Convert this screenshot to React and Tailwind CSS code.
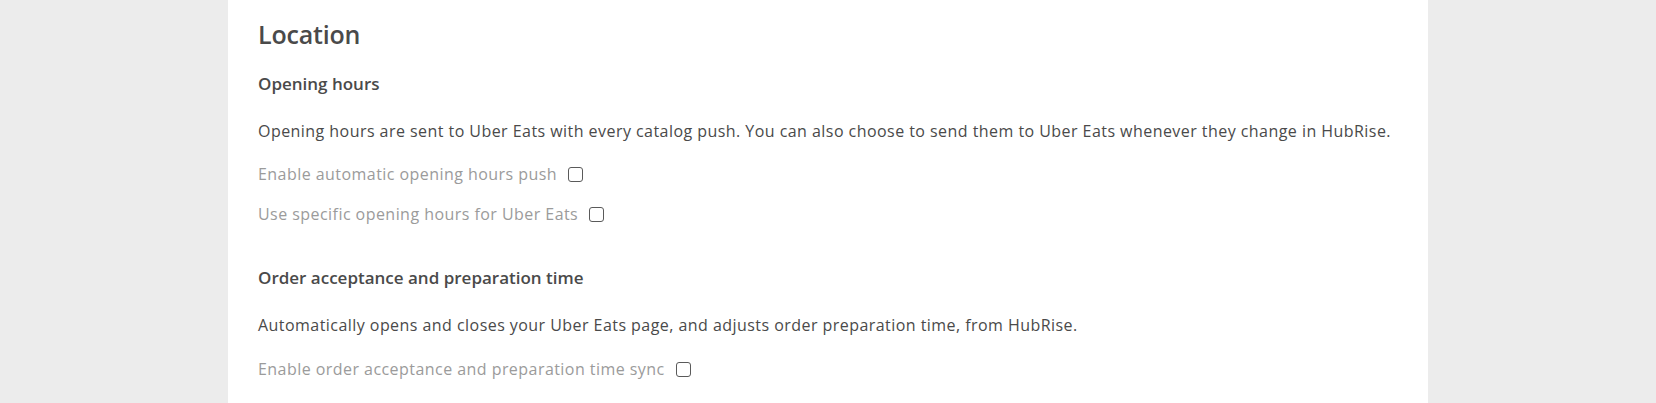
import React from 'react';

const font = { fontFamily: '"Open Sans", "Noto Sans", sans-serif' };

function CheckRow({ label, className = '' }) {
  return (
    <label className={`flex items-center h-[24px] leading-[24px] text-[16px] tracking-[0.45px] text-[#9b9b9b] ${className}`}>
      <span>{label}</span>
      <span className="ml-[11px] w-[15px] h-[15px] border-[1.5px] border-[#5a5a5a] rounded-[3px] bg-white" />
    </label>
  );
}

export default function App() {
  return (
    <div className="min-h-[403px] bg-[#ececec]" style={font}>
      <div className="w-[1200px] mx-auto bg-white min-h-[403px] pl-[30px] pr-[30px] pt-[18px] text-[#4a4a4a]">
        <h2 className="text-[25px] leading-[32px] font-semibold tracking-[-0.2px]">Location</h2>

        <h3 className="mt-[22px] text-[17px] leading-[24px] font-semibold">Opening hours</h3>
        <p className="mt-[23px] text-[16px] leading-[24px] tracking-[0.45px]">
          Opening hours are sent to Uber Eats with every catalog push. You can also choose to send them to Uber Eats whenever they change in HubRise.
        </p>
        <CheckRow className="mt-[19px]" label="Enable automatic opening hours push" />
        <CheckRow className="mt-[16px]" label="Use specific opening hours for Uber Eats" />

        <h3 className="mt-[40px] text-[17px] leading-[24px] font-semibold">Order acceptance and preparation time</h3>
        <p className="mt-[23px] text-[16px] leading-[24px] tracking-[0.45px]">
          Automatically opens and closes your Uber Eats page, and adjusts order preparation time, from HubRise.
        </p>
        <CheckRow className="mt-[20px]" label="Enable order acceptance and preparation time sync" />
      </div>
    </div>
  );
}
